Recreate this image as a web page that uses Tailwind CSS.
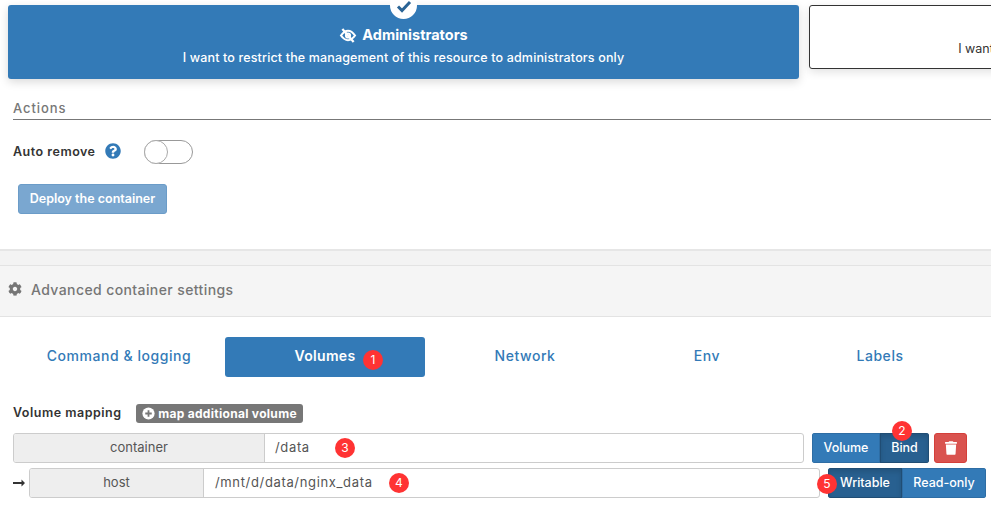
<!DOCTYPE html>
<html lang="en">
<head>
    <meta charset="UTF-8">
    <title>Deploy container</title>
    <script src="https://cdn.jsdelivr.net/npm/@tailwindcss/browser@4"></script>
</head>
<body class="h-[507px] w-[991px] overflow-hidden bg-white font-['Inter',sans-serif] text-[13px] text-[#333]">

    <!-- access control cards -->
    <div class="flex gap-[10px] pl-2 pt-[5px] h-[95px] overflow-hidden">
        <div class="relative flex h-[74px] w-[791px] shrink-0 flex-col items-center rounded-[3px] bg-[#337ab7] text-white shadow-[0_3px_10px_rgba(0,0,0,0.15)]">
            <div class="absolute left-[382px] top-[-13px] flex size-[27px] items-center justify-center rounded-full bg-white">
                <svg viewBox="0 0 16 16" class="size-[16px] text-[#2a6496]" fill="none" stroke="currentColor" stroke-width="3"><path d="M2 8.5l4 4 8-8.5"/></svg>
            </div>
            <div class="mt-[21px] flex items-center gap-[5px] text-[14.5px] font-bold leading-[18px]">
                <svg viewBox="0 0 18 16" class="h-[15px] w-[18px]" fill="none" stroke="currentColor" stroke-width="2.2"><path d="M1.5 8C4 4.5 6.500 3 9 3s5 1.500 7.500 5c-2.500 3.500-5 5-7.500 5S4 11.500 1.500 8z"/><circle cx="9" cy="8" r="2.200"/><path d="M3 1l12 14" stroke-width="2.400"/></svg>
                <span>Administrators</span>
            </div>
            <p class="mt-[5px] text-[12.5px] font-medium leading-[18px] tracking-[0.15px]">I want to restrict the management of this resource to administrators only</p>
        </div>
        <div class="flex h-[64px] w-[394px] shrink-0 flex-col items-center rounded-[3px] border border-[#333] bg-white shadow-[0_3px_10px_rgba(0,0,0,0.12)]">
            <p class="mt-[34px] text-[12.5px] leading-[18px] whitespace-nowrap">I want to restrict</p>
        </div>
    </div>

    <!-- actions -->
    <div class="ml-[13px] mt-[-1px] h-[26px] border-b border-[#777] pt-[6px] text-[13px] font-medium leading-[17px] tracking-[0.9px] text-[#777]">Actions</div>
    <div class="mt-[20px] flex h-[24px] items-center pl-[13px]">
        <span class="w-[92px] text-[12.5px] font-semibold tracking-[0.5px]">Auto remove</span>
        <svg viewBox="0 0 512 512" class="mb-[2px] size-[16px] text-[#337ab7]" fill="currentColor"><path d="M504 256c0 136.997-111.043 248-248 248S8 392.997 8 256C8 119.083 119.043 8 256 8s248 111.083 248 248zM262.655 90c-54.497 0-89.255 22.957-116.549 63.758-3.536 5.286-2.353 12.415 2.715 16.258l34.699 26.31c5.205 3.947 12.621 3.008 16.665-2.122 17.864-22.658 30.113-35.797 57.303-35.797 20.429 0 45.698 13.148 45.698 32.958 0 14.976-12.363 22.667-32.534 33.976C247.128 238.528 216 254.941 216 296v4c0 6.627 5.373 12 12 12h56c6.627 0 12-5.373 12-12v-1.333c0-28.462 83.186-29.647 83.186-106.667 0-58.002-60.165-102-116.531-102zM256 338c-25.365 0-46 20.635-46 46 0 25.364 20.635 46 46 46s46-20.636 46-46c0-25.365-20.635-46-46-46z"/></svg>
        <div class="ml-[23px] h-[24px] w-[49px] rounded-full border border-[#999] bg-white">
            <div class="ml-[-1px] mt-[-1px] size-[24px] rounded-full border border-[#aaa] bg-white"></div>
        </div>
    </div>
    <button class="ml-[18px] mt-[20px] block h-[30px] w-[149px] rounded-[3px] border border-[#6b9cc8] bg-[#7aa7d0] text-[12.5px] font-semibold text-white">Deploy the container</button>

    <!-- advanced settings header -->
    <div class="mt-[35px] h-[17px] border-t-2 border-b border-t-[#e6e6e6] border-b-[#e3e3e3] bg-[#f3f3f3]"></div>
    <div class="flex h-[51px] items-center gap-[9px] border-b border-[#e3e3e3] bg-[#f5f5f5] pb-[4px] pl-2 text-[14px] font-medium tracking-[0.4px] text-[#767676]">
        <svg viewBox="0 0 512 512" class="size-[14px] text-[#767676]" fill="currentColor"><path d="M487.4 315.7l-42.6-24.6c4.3-23.2 4.3-47 0-70.2l42.6-24.6c4.9-2.8 7.1-8.6 5.5-14-11.1-35.6-30-67.8-54.7-94.6-3.8-4.1-10-5.1-14.8-2.3L380.8 110c-17.9-15.4-38.500-27.3-60.8-35.1V25.8c0-5.6-3.9-10.500-9.4-11.700-36.700-8.200-74.300-7.800-109.200 0-5.500 1.200-9.400 6.100-9.400 11.700V75c-22.200 7.900-42.800 19.800-60.800 35.100L88.700 85.500c-4.900-2.800-11-1.900-14.800 2.300-24.700 26.700-43.600 58.900-54.700 94.600-1.700 5.400.6 11.200 5.500 14L67.300 221c-4.300 23.200-4.300 47 0 70.200l-42.600 24.600c-4.900 2.800-7.100 8.600-5.500 14 11.100 35.600 30 67.800 54.700 94.600 3.800 4.100 10 5.100 14.800 2.300l42.600-24.600c17.900 15.400 38.500 27.300 60.800 35.100v49.200c0 5.600 3.900 10.500 9.400 11.700 36.700 8.200 74.300 7.800 109.200 0 5.500-1.200 9.400-6.100 9.400-11.700v-49.200c22.200-7.900 42.800-19.800 60.800-35.100l42.600 24.600c4.900 2.800 11 1.900 14.800-2.300 24.700-26.700 43.600-58.900 54.700-94.600 1.500-5.500-.7-11.300-5.600-14.100zM256 336c-44.100 0-80-35.900-80-80s35.900-80 80-80 80 35.900 80 80-35.900 80-80 80z"/></svg>
        Advanced container settings
    </div>

    <!-- tabs -->
    <div class="ml-[19px] mt-[20px] flex h-[40px] items-center text-[14px] font-medium tracking-[0.55px] text-[#337ab7]">
        <a class="flex h-full w-[200px] items-center justify-center pb-[3px]">Command &amp; logging</a>
        <a class="relative ml-[6px] flex h-full w-[200px] items-center justify-center rounded-[3px] bg-[#337ab7] pb-[3px] font-semibold tracking-[0.3px] text-white">Volumes
            <span class="absolute left-[138px] top-[13px] flex size-[20px] items-center justify-center rounded-full bg-[#f33] text-[12px] font-normal text-white">1</span>
        </a>
        <a class="flex h-full w-[200px] items-center justify-center pb-[3px]">Network</a>
        <a class="flex h-full w-[164px] items-center justify-center pb-[3px]">Env</a>
        <a class="flex h-full w-[182px] items-center justify-center pb-[3px]">Labels</a>
    </div>

    <!-- volume mapping -->
    <div class="ml-[13px] mt-[27px] flex h-[19px] items-center">
        <span class="w-[123px] text-[12.500px] font-semibold tracking-[0.5px]">Volume mapping</span>
        <span class="flex h-[19px] w-[167px] items-center justify-center gap-[3px] rounded-[3px] bg-[#777] text-[12px] font-bold tracking-[0.3px] text-white">
            <svg viewBox="0 0 16 16" class="size-[13px]"><circle cx="8" cy="8" r="7.500" fill="#fff"/><path d="M8 4v8M4 8h8" stroke="#777" stroke-width="2.200"/></svg>
            map additional volume
        </span>
    </div>

    <div class="relative mt-[10px] flex h-[30px] pl-[13px]">
        <div class="flex w-[791px] overflow-hidden rounded-[3px] border border-[#ccc]">
            <span class="flex w-[251px] items-center justify-center border-r border-[#ccc] bg-[#eee] text-[#555]">container</span>
            <span class="flex items-center pl-[10px] tracking-[0.65px] text-[#555]">/data</span>
        </div>
        <span class="absolute left-[335px] top-[5px] flex size-[20px] items-center justify-center rounded-full bg-[#f33] text-[12px] text-white">3</span>
        <div class="ml-2 flex w-[117px] overflow-hidden rounded-[3px] text-[12.500px] font-medium text-white">
            <span class="flex w-[68px] items-center justify-center border border-[#2e6da4] bg-[#337ab7]">Volume</span>
            <span class="flex w-[49px] items-center justify-center border border-[#204d74] bg-[#286090] shadow-[inset_0_3px_5px_rgba(0,0,0,0.125)]">Bind</span>
        </div>
        <span class="absolute left-[892px] top-[-12px] flex size-[20px] items-center justify-center rounded-full bg-[#f33] text-[12px] text-white">2</span>
        <button class="ml-[5px] flex w-[33px] items-center justify-center rounded-[3px] border border-[#d43f3a] bg-[#d9534f]">
            <svg viewBox="0 0 448 512" class="h-[14px] w-[12px]" fill="#fff"><path d="M432 32H312l-9.400-18.700A24 24 0 0 0 281.100 0H166.800a23.720 23.720 0 0 0-21.400 13.300L136 32H16A16 16 0 0 0 0 48v32a16 16 0 0 0 16 16h416a16 16 0 0 0 16-16V48a16 16 0 0 0-16-16zM53.200 467a48 48 0 0 0 47.900 45h245.800a48 48 0 0 0 47.900-45L416 128H32z"/></svg>
        </button>
    </div>

    <div class="relative mt-[5px] flex h-[30px] items-center pl-[13px]">
        <svg viewBox="0 0 12 8" class="h-[8px] w-[12px] text-[#333]" fill="currentColor"><path d="M0 3h8.500V0.500L12 4 8.500 7.500V5H0z"/></svg>
        <div class="ml-[4px] flex h-full w-[791px] overflow-hidden rounded-[3px] border border-[#ccc]">
            <span class="flex w-[174px] items-center justify-center border-r border-[#ccc] bg-[#eee] text-[#555]">host</span>
            <span class="flex items-center pl-[11px] tracking-[0.65px] text-[#555]">/mnt/d/data/nginx_data</span>
        </div>
        <span class="absolute left-[389px] top-[5px] flex size-[20px] items-center justify-center rounded-full bg-[#f33] text-[12px] text-white">4</span>
        <div class="ml-2 flex h-full w-[158px] overflow-hidden rounded-[3px] text-[12.500px] font-medium text-white">
            <span class="flex w-[74px] items-center justify-center border border-[#204d74] bg-[#286090] shadow-[inset_0_3px_5px_rgba(0,0,0,0.125)]">Writable</span>
            <span class="flex w-[84px] items-center justify-center border border-[#2e6da4] bg-[#337ab7]">Read-only</span>
        </div>
        <span class="absolute left-[817px] top-[6px] flex size-[20px] items-center justify-center rounded-full bg-[#f33] text-[12px] text-white">5</span>
    </div>
</body>
</html>
